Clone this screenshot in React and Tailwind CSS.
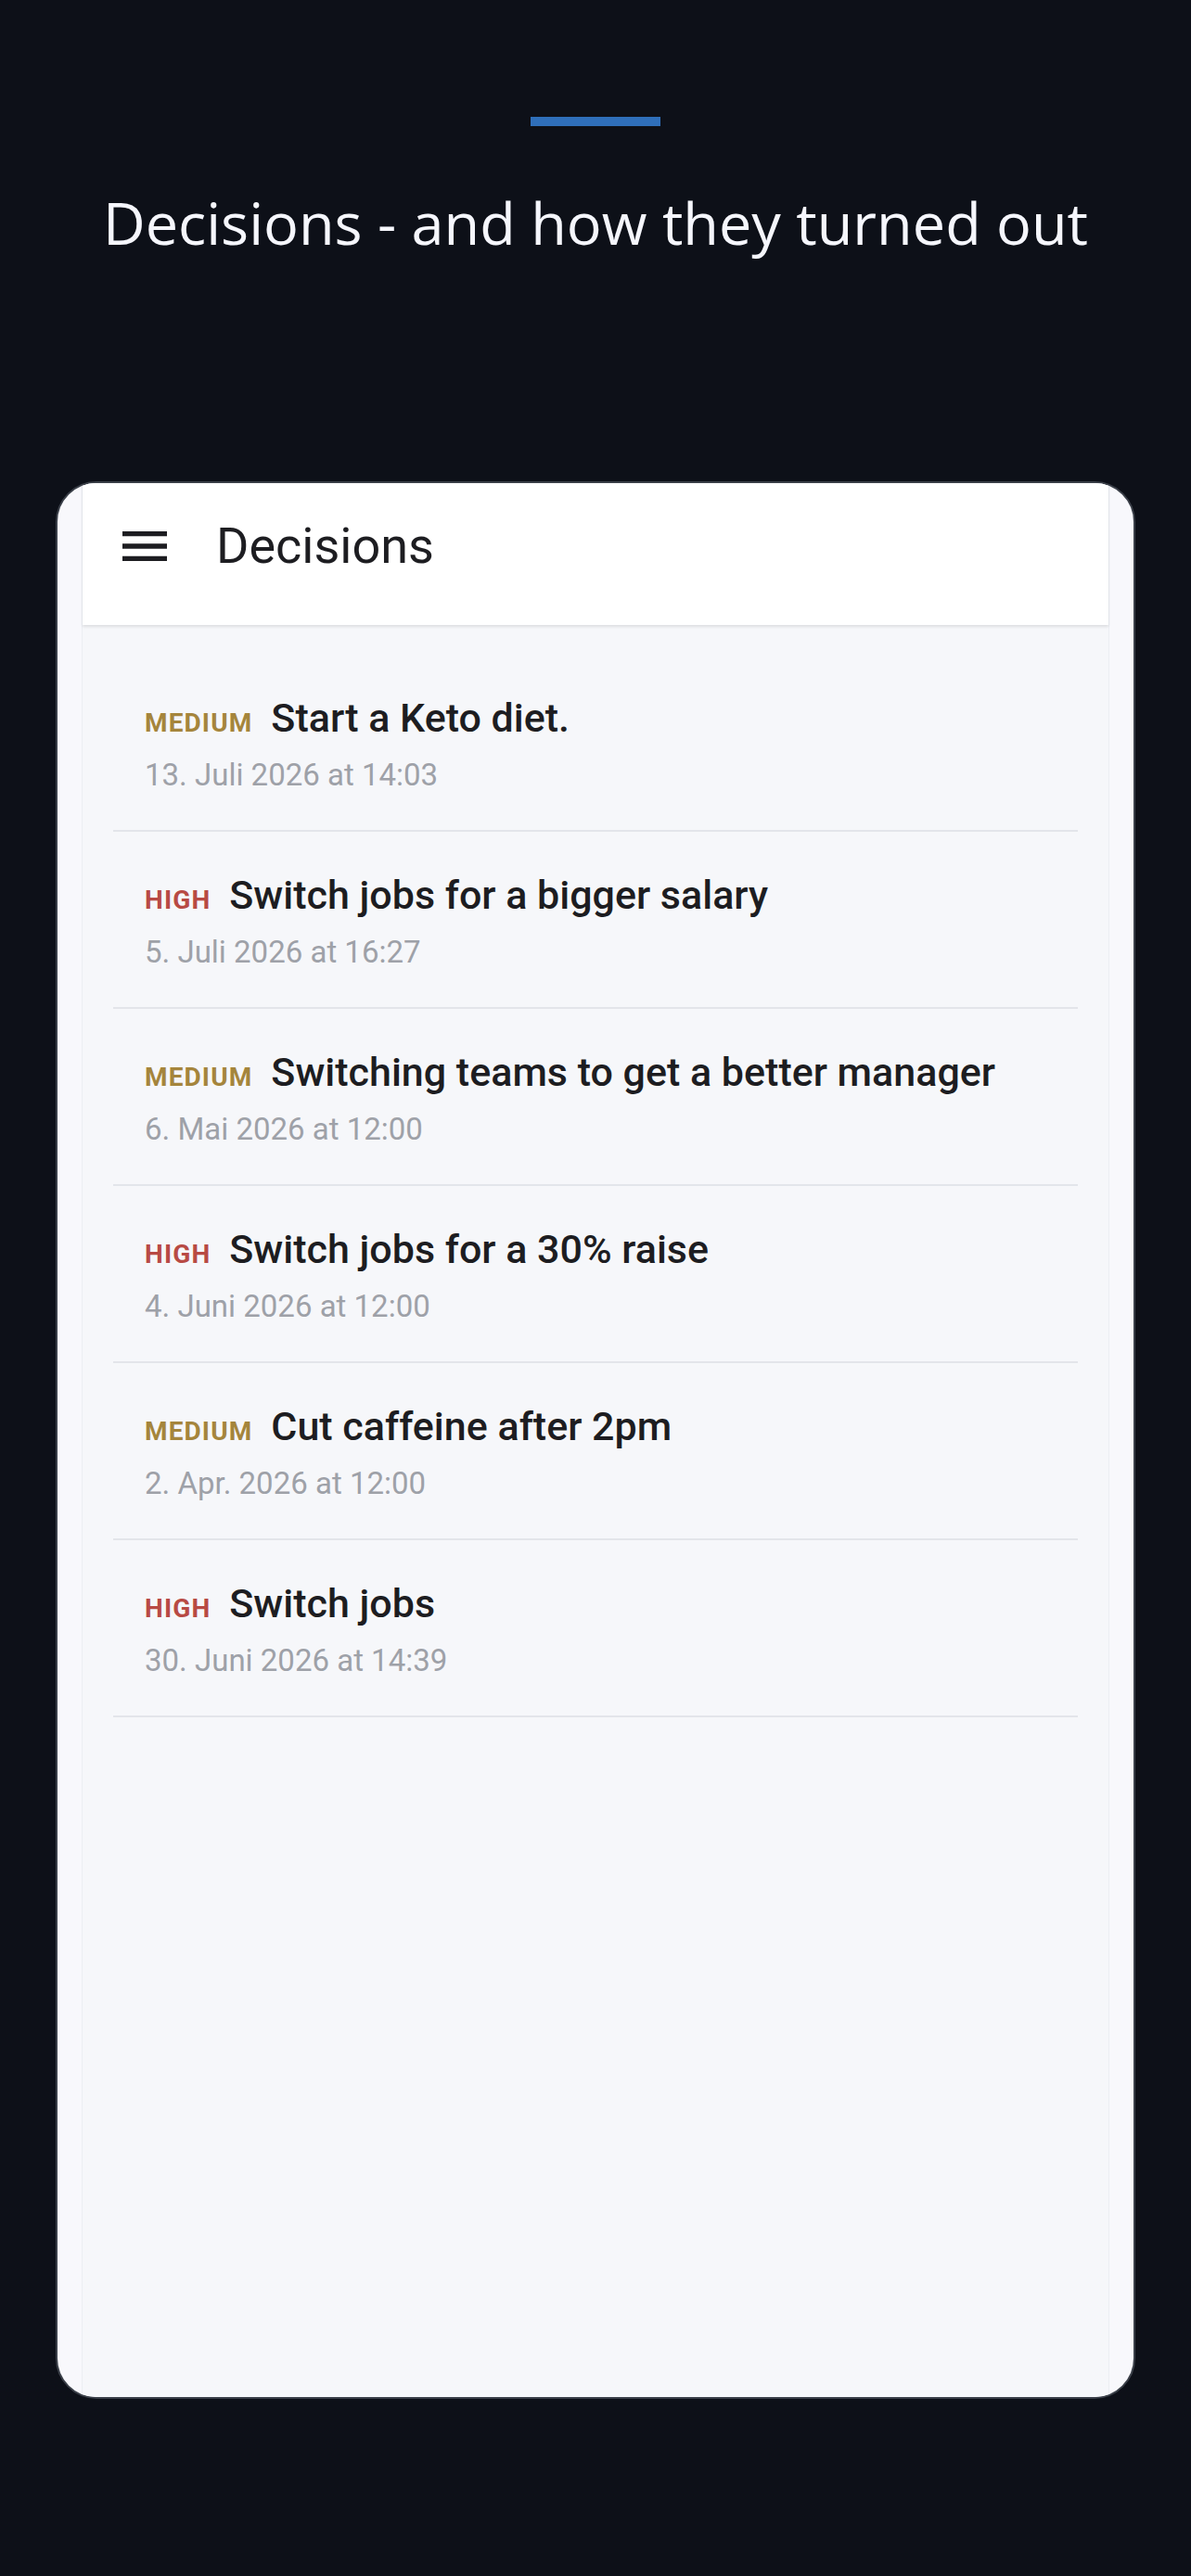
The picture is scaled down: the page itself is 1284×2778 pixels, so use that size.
const decisions = [
  { level: 'MEDIUM', title: 'Start a Keto diet.', date: '13. Juli 2026 at 14:03' },
  { level: 'HIGH', title: 'Switch jobs for a bigger salary', date: '5. Juli 2026 at 16:27' },
  { level: 'MEDIUM', title: 'Switching teams to get a better manager', date: '6. Mai 2026 at 12:00' },
  { level: 'HIGH', title: 'Switch jobs for a 30% raise', date: '4. Juni 2026 at 12:00' },
  { level: 'MEDIUM', title: 'Cut caffeine after 2pm', date: '2. Apr. 2026 at 12:00' },
  { level: 'HIGH', title: 'Switch jobs', date: '30. Juni 2026 at 14:39' },
];

const MenuIcon = () => (
  <svg width="64" height="64" viewBox="0 0 24 24" fill="#1d1d21">
    <path d="M3 18h18v-2H3v2zm0-5h18v-2H3v2zm0-7v2h18V6H3z" />
  </svg>
);

const DecisionRow = ({ item }) => {
  const levelClass = item.level === 'HIGH' ? 'text-[#b84a44]' : 'text-[#a5853c]';
  return (
    <div className="pt-[44px] pb-[41px] pl-[34px] border-b-2 border-[#e3e5ea]">
      <div className="flex items-baseline gap-[20px] h-[48px]">
        <span className={`text-[28px] font-bold tracking-[0.04em] leading-none ${levelClass}`}>
          {item.level}
        </span>
        <span className="text-[43px] font-medium leading-[48px] text-[#1d1d21]">{item.title}</span>
      </div>
      <div className="mt-[20px] text-[33px] leading-[36px] text-[#9ea1a8]">{item.date}</div>
    </div>
  );
};

export default function App() {
  return (
    <div className="min-h-[2778px] bg-[#0d1018] flex flex-col items-center pt-[126px]">
      <div className="w-[140px] h-[10px] bg-[#2f6fba]" />
      <h1
        className="mt-[68px] text-[63px] font-medium leading-[72px] text-[#f5f6fc]"
        style={{ fontFamily: '"Open Sans", "Noto Sans", sans-serif' }}
      >
        Decisions - and how they turned out
      </h1>

      <div
        className="mt-[243px] w-[1164px] h-[2068px] rounded-[44px] border-2 border-[#3a3f48] bg-[#f8f8fc] px-[26px] overflow-hidden flex"
        style={{ fontFamily: 'Roboto, "Liberation Sans", sans-serif' }}
      >
        <div className="flex-1 flex flex-col bg-[#f6f7fa] border-x border-[#eceef3]">
          <div className="h-[153px] shrink-0 bg-white flex items-center pl-[35px] pb-[17px] shadow-[0_2px_3px_rgba(0,0,0,0.1)] relative z-10">
            <MenuIcon />
            <span className="ml-[45px] text-[54px] leading-[60px] text-[#1d1d21]">Decisions</span>
          </div>
          <div className="pt-[32px] px-[33px]">
            {decisions.map((item, i) => (
              <DecisionRow key={i} item={item} />
            ))}
          </div>
        </div>
      </div>
    </div>
  );
}
